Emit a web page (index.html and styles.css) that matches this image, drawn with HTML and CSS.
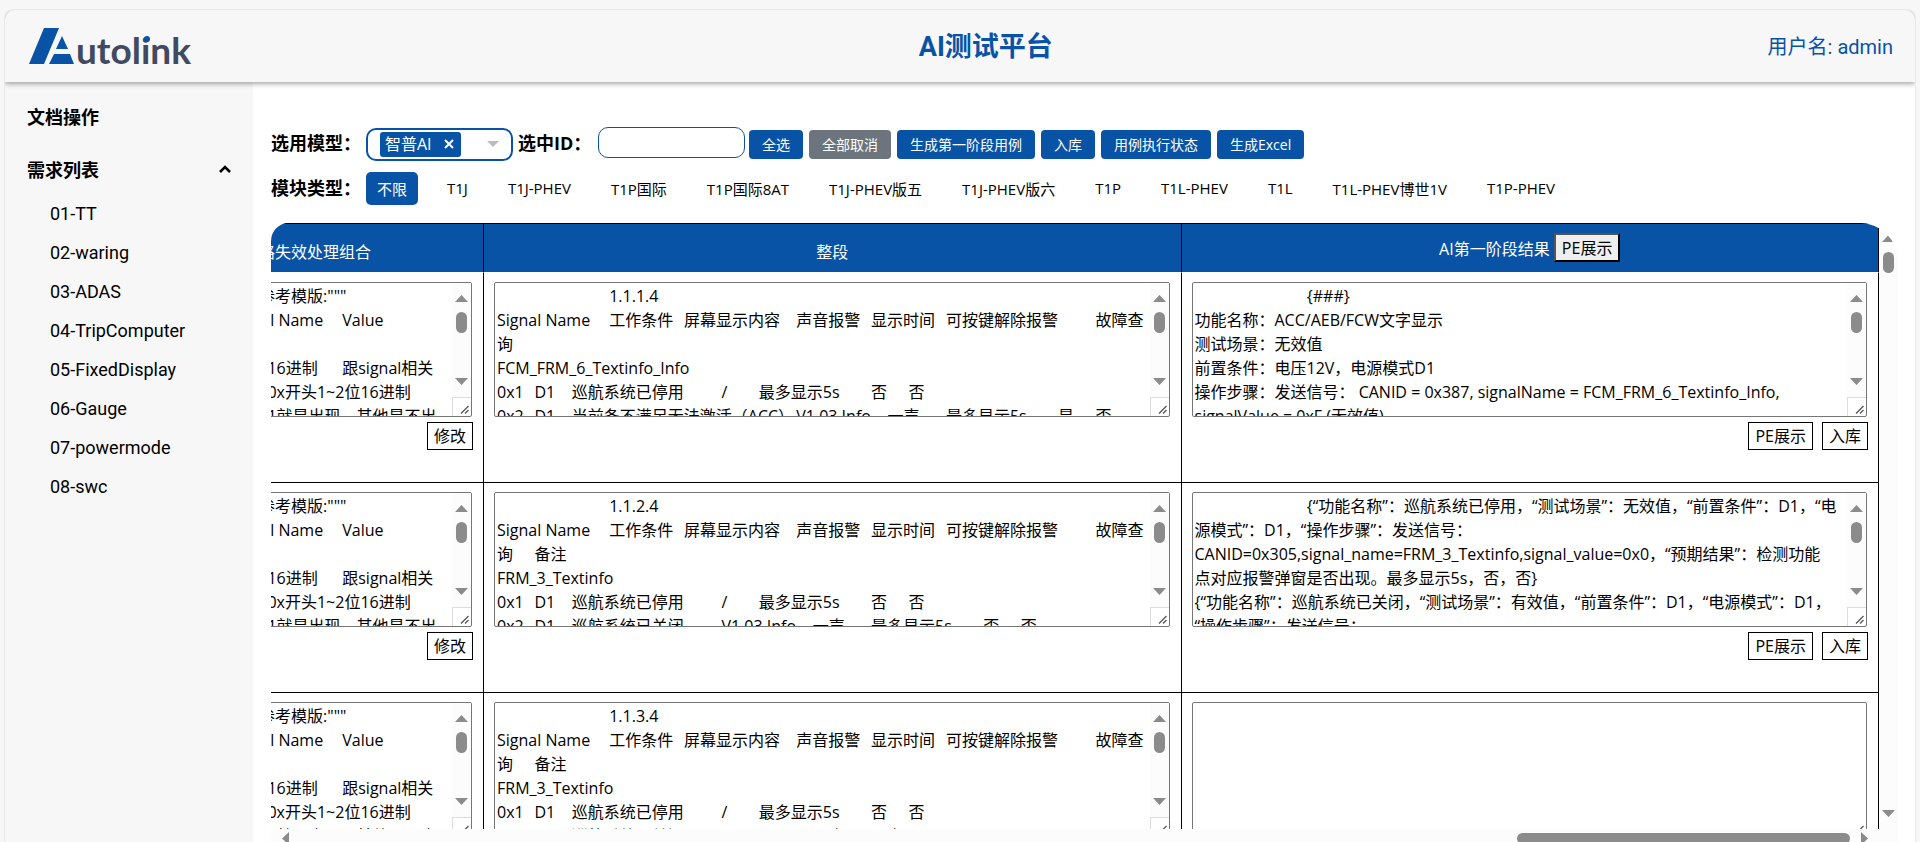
FILE: index.html
```html
<!DOCTYPE html>
<html lang="zh-CN">
<head>
<meta charset="utf-8">
<title>AI测试平台</title>
<link rel="stylesheet" href="styles.css">
</head>
<body>
<svg width="0" height="0" class="defs" aria-hidden="true">
  <symbol id="up" viewBox="0 0 13 7"><path d="M0 7 6.500 0 13 7z"/></symbol>
  <symbol id="down" viewBox="0 0 13 7"><path d="M0 0h13L6.500 7z"/></symbol>
  <symbol id="grip" viewBox="0 0 9 9"><path d="M1 8.500 8.500 1M5 8.500 8.500 5" fill="none" stroke="#555" stroke-width="1.300"/></symbol>
</svg>
<div class="shell">
  <header class="topbar">
    <svg class="logo" width="175" height="50" viewBox="0 0 175 50" role="img" aria-label="Autolink">
      <path fill="#0853a6" d="M15 6h15L15 42H0z"/>
      <path fill="#0853a6" d="M33 14 39 27H27zM25 32h16l4 10H20z"/>
      <text class="logo-text" x="47" y="42">utolink</text>
      <circle cx="118" cy="17" r="3" fill="#0853a6"/>
    </svg>
    <h1 class="title">AI测试平台</h1>
    <div class="user">用户名: admin</div>
  </header>
  <div class="body">
    <nav class="sidebar">
      <div class="side-head">文档操作</div>
      <button class="side-head side-toggle" type="button">需求列表
        <svg width="12" height="8" viewBox="0 0 12 8"><path d="M1 7 6 2l5 5" fill="none" stroke="#000" stroke-width="2.600"/></svg>
      </button>
      <ul class="side-list">
        <li><a href="#">01-TT</a></li>
        <li><a href="#">02-waring</a></li>
        <li><a href="#">03-ADAS</a></li>
        <li><a href="#">04-TripComputer</a></li>
        <li><a href="#">05-FixedDisplay</a></li>
        <li><a href="#">06-Gauge</a></li>
        <li><a href="#">07-powermode</a></li>
        <li><a href="#">08-swc</a></li>
      </ul>
    </nav>
    <main class="main">
      <div class="filters">
        <span class="label" id="model-label">选用模型：</span>
        <div class="combo" role="combobox" aria-labelledby="model-label" aria-expanded="false">
          <span class="tag">智普AI
            <button class="tag-x" type="button" aria-label="移除"><svg width="10" height="10" viewBox="0 0 10 10"><path d="M1 1l8 8M9 1 1 9" stroke="#fff" stroke-width="2"/></svg></button>
          </span>
          <svg class="caret" width="12" height="6" viewBox="0 0 12 6"><path d="M0 0h12L6 6z" fill="#bbb"/></svg>
        </div>
        <label class="label label-id" for="sel-id">选中ID：</label>
        <input class="id-input" id="sel-id" type="text">
        <div class="actions">
          <button class="btn" type="button">全选</button>
          <button class="btn btn-gray" type="button">全部取消</button>
          <button class="btn" type="button">生成第一阶段用例</button>
          <button class="btn" type="button">入库</button>
          <button class="btn" type="button">用例执行状态</button>
          <button class="btn" type="button">生成Excel</button>
        </div>
      </div>
      <div class="types">
        <span class="label">模块类型：</span>
        <div class="chips">
          <button class="chip chip-on" type="button">不限</button>
          <button class="chip" type="button">T1J</button>
          <button class="chip" type="button">T1J-PHEV</button>
          <button class="chip" type="button">T1P国际</button>
          <button class="chip" type="button">T1P国际8AT</button>
          <button class="chip" type="button">T1J-PHEV版五</button>
          <button class="chip" type="button">T1J-PHEV版六</button>
          <button class="chip" type="button">T1P</button>
          <button class="chip" type="button">T1L-PHEV</button>
          <button class="chip" type="button">T1L</button>
          <button class="chip" type="button">T1L-PHEV博世1V</button>
          <button class="chip" type="button">T1P-PHEV</button>
        </div>
      </div>
      <div class="scroller">
        <div class="viewport">
          <table class="cases">
            <colgroup><col class="col-first"><col><col></colgroup>
            <thead>
              <tr>
                <th class="th-right">短路失效处理组合</th>
                <th>整段</th>
                <th class="th-result">AI第一阶段结果 <button class="pe-btn" type="button">PE展示</button></th>
              </tr>
            </thead>
            <tbody>
              <tr>
                <td>
                  <div class="box"><textarea aria-label="处理组合 1">       参考模版:"""
Signal Name&#9;Value

&#9;16进制&#9;跟signal相关
&#9;0x开头1~2位16进制
&#9;1就是出现，其他是不出现</textarea><div class="bar-col"><div class="vbar"><svg><use href="#up"/></svg><i></i><svg><use href="#down"/></svg></div><div class="corner"><svg><use href="#grip"/></svg></div></div></div>
                  <div class="row-btns"><button type="button">修改</button></div>
                </td>
                <td>
                  <div class="box"><textarea aria-label="整段 1">&#9;&#9;&#9;1.1.1.4
Signal Name&#9;工作条件&#9;屏幕显示内容&#9;声音报警&#9;显示时间&#9;可按键解除报警&#9;故障查询
FCM_FRM_6_Textinfo_Info
0x1&#9;D1&#9;巡航系统已停用&#9;/&#9;最多显示5s&#9;否&#9;否
0x2&#9;D1&#9;当前条不满足无法激活（ACC）&#9;V1.03 Info    一声&#9;最多显示5s&#9;是&#9;否</textarea><div class="bar-col"><div class="vbar"><svg><use href="#up"/></svg><i></i><svg><use href="#down"/></svg></div><div class="corner"><svg><use href="#grip"/></svg></div></div></div>
                </td>
                <td>
                  <div class="box"><textarea aria-label="AI第一阶段结果 1">&#9;&#9;&#9;{###}
功能名称：ACC/AEB/FCW文字显示
测试场景：无效值
前置条件：电压12V，电源模式D1
操作步骤：发送信号： CANID = 0x387, signalName = FCM_FRM_6_Textinfo_Info, signalValue = 0xF (无效值)</textarea><div class="bar-col"><div class="vbar"><svg><use href="#up"/></svg><i></i><svg><use href="#down"/></svg></div><div class="corner"><svg><use href="#grip"/></svg></div></div></div>
                  <div class="row-btns"><button type="button">PE展示</button><button type="button">入库</button></div>
                </td>
              </tr>
              <tr>
                <td>
                  <div class="box"><textarea aria-label="处理组合 2">       参考模版:"""
Signal Name&#9;Value

&#9;16进制&#9;跟signal相关
&#9;0x开头1~2位16进制
&#9;1就是出现，其他是不出现</textarea><div class="bar-col"><div class="vbar"><svg><use href="#up"/></svg><i></i><svg><use href="#down"/></svg></div><div class="corner"><svg><use href="#grip"/></svg></div></div></div>
                  <div class="row-btns"><button type="button">修改</button></div>
                </td>
                <td>
                  <div class="box"><textarea aria-label="整段 2">&#9;&#9;&#9;1.1.2.4
Signal Name&#9;工作条件&#9;屏幕显示内容&#9;声音报警&#9;显示时间&#9;可按键解除报警&#9;故障查询&#9;备注
FRM_3_Textinfo
0x1&#9;D1&#9;巡航系统已停用&#9;/&#9;最多显示5s&#9;否&#9;否
0x2&#9;D1&#9;巡航系统已关闭&#9;V1.03 Info    一声&#9;最多显示5s&#9;否&#9;否</textarea><div class="bar-col"><div class="vbar"><svg><use href="#up"/></svg><i></i><svg><use href="#down"/></svg></div><div class="corner"><svg><use href="#grip"/></svg></div></div></div>
                </td>
                <td>
                  <div class="box"><textarea aria-label="AI第一阶段结果 2">&#9;&#9;&#9;{“功能名称”：巡航系统已停用，“测试场景”：无效值，“前置条件”：D1，“电源模式”：D1，“操作步骤”：发送信号：CANID=0x305,signal_name=FRM_3_Textinfo,signal_value=0x0，“预期结果”：检测功能
点对应报警弹窗是否出现。最多显示5s，否，否}
{“功能名称”：巡航系统已关闭，“测试场景”：有效值，“前置条件”：D1，“电源模式”：D1，“操作步骤”：发送信号：</textarea><div class="bar-col"><div class="vbar"><svg><use href="#up"/></svg><i></i><svg><use href="#down"/></svg></div><div class="corner"><svg><use href="#grip"/></svg></div></div></div>
                  <div class="row-btns"><button type="button">PE展示</button><button type="button">入库</button></div>
                </td>
              </tr>
              <tr>
                <td>
                  <div class="box"><textarea aria-label="处理组合 3">       参考模版:"""
Signal Name&#9;Value

&#9;16进制&#9;跟signal相关
&#9;0x开头1~2位16进制
&#9;1就是出现，其他是不出现</textarea><div class="bar-col"><div class="vbar"><svg><use href="#up"/></svg><i></i><svg><use href="#down"/></svg></div><div class="corner"><svg><use href="#grip"/></svg></div></div></div>
                </td>
                <td>
                  <div class="box"><textarea aria-label="整段 3">&#9;&#9;&#9;1.1.3.4
Signal Name&#9;工作条件&#9;屏幕显示内容&#9;声音报警&#9;显示时间&#9;可按键解除报警&#9;故障查询&#9;备注
FRM_3_Textinfo
0x1&#9;D1&#9;巡航系统已停用&#9;/&#9;最多显示5s&#9;否&#9;否
0x2&#9;D1&#9;巡航系统已关闭&#9;V1.03 Info    一声&#9;最多显示5s&#9;否&#9;否</textarea><div class="bar-col"><div class="vbar"><svg><use href="#up"/></svg><i></i><svg><use href="#down"/></svg></div><div class="corner"><svg><use href="#grip"/></svg></div></div></div>
                </td>
                <td>
                  <div class="box box-empty"><textarea aria-label="AI第一阶段结果 3"></textarea><div class="bar-col"><div class="corner"><svg><use href="#grip"/></svg></div></div></div>
                </td>
              </tr>
            </tbody>
          </table>
        </div>
        <div class="vbar"><svg><use href="#up"/></svg><i></i><svg><use href="#down"/></svg></div>
        <div class="hbar">
          <svg width="7" height="13" viewBox="0 0 7 13"><path d="M7 0v13L0 6.500z"/></svg>
          <i></i>
          <svg width="7" height="13" viewBox="0 0 7 13"><path d="M0 0v13l7-6.500z"/></svg>
        </div>
      </div>
    </main>
  </div>
</div>
</body>
</html>
```
FILE: styles.css
```css
* { box-sizing: border-box; }

body {
  display: flex;
  height: 100vh;
  margin: 0;
  overflow: hidden;
  background: #f7f7f7;
  color: #000;
  font: 16px/24px "Open Sans", "Noto Sans CJK SC", sans-serif;
}

button, input, textarea { font-family: inherit; color: inherit; }
button { cursor: pointer; }
.defs { position: absolute; }

.shell {
  display: flex;
  flex: 1;
  flex-direction: column;
  height: 100vh;
  margin: 9px 4px 0;
  border: 1px solid #e9e9e9;
  border-radius: 10px 10px 0 0;
}

.topbar {
  position: relative;
  display: flex;
  flex: none;
  align-items: center;
  justify-content: space-between;
  height: 72px;
  padding: 2px 22px 0 24px;
  background: #f7f7f7;
  border-radius: 10px 10px 0 0;
  box-shadow: 0 2px 5px rgba(0, 0, 0, .35);
  clip-path: inset(0 0 -10px 0);
  color: #0853a6;
  font-family: Roboto, "Noto Sans CJK SC", sans-serif;
}

.logo-text { font: 700 37px Lato, sans-serif; fill: #414a60; }
.title { margin: 0; font-size: 27px; line-height: 36px; }
.user { font-size: 20px; }

.body { display: flex; flex: 1; min-height: 0; }

.sidebar {
  flex: none;
  width: 248px;
  padding: 23px 22px 0;
  background: #f7f7f7;
  font-family: Roboto, "Noto Sans CJK SC", sans-serif;
}

.side-head {
  display: flex;
  align-items: center;
  justify-content: space-between;
  width: 100%;
  height: 26px;
  margin-bottom: 25px;
  padding: 0;
  border: 0;
  background: none;
  font-size: 18px;
  font-weight: 700;
}

.side-toggle { margin-bottom: 12px; }
.side-list { margin: 0; padding: 0 0 0 23px; list-style: none; font-size: 18px; line-height: 39px; }
.side-list a { color: inherit; text-decoration: none; }

.main {
  display: flex;
  flex: 1;
  flex-direction: column;
  min-width: 0;
  padding: 44px 17px 2px 18px;
  background: #fff;
}

.filters, .types { display: flex; align-items: center; }
.filters { height: 36px; }
.types { height: 34px; margin: 9px 0 18px; }
.label { flex: none; width: 95px; font-size: 18px; font-weight: 700; }
.filters .label { padding-bottom: 3px; }
.label-id { width: 80px; margin-left: 5px; }

.combo {
  display: flex;
  align-items: center;
  justify-content: space-between;
  width: 147px;
  height: 33px;
  padding: 0 12px;
  border: 2px solid #0853a6;
  border-radius: 10px;
}

.tag {
  display: flex;
  align-items: center;
  gap: 12px;
  height: 25px;
  padding: 0 7px 0 5px;
  border-radius: 3px;
  background: #0853a6;
  color: #fff;
}

.tag-x { display: flex; padding: 0; border: 0; background: none; }

.id-input {
  width: 147px;
  height: 31px;
  margin: 0 4px 3px 0;
  border: 1px solid #0853a6;
  border-radius: 10px;
}

.actions { display: flex; gap: 6px; }

.btn {
  height: 29px;
  padding: 0 13px;
  border: 0;
  border-radius: 4px;
  background: #0853a6;
  color: #fff;
  font-size: 14px;
}

.btn-gray { background: #6c757d; }

.chips { display: flex; gap: 18px; }

.chip {
  height: 33px;
  padding: 0 11px;
  border: 0;
  border-radius: 5px;
  background: none;
  font-size: 15px;
}

.chip-on { background: #0853a6; color: #fff; }

.scroller {
  display: grid;
  flex: 1;
  grid-template: minmax(0, 1fr) 19px / minmax(0, 1fr) 19px;
  min-height: 0;
  overflow: hidden;
  border-radius: 18px 38px 0 0;
  background: #fcfcfc;
}

.viewport { overflow: hidden; background: #fff; }

.cases {
  width: calc(100% + 54px);
  margin-left: -54px;
  border-spacing: 0;
  table-layout: fixed;
}

.col-first { width: 267px; }

.cases th {
  height: 50px;
  padding: 7px 10px 0;
  border: solid #000;
  border-width: 1px 1px 1px 0;
  border-bottom-color: #fff;
  background: #0853a6;
  color: #fff;
  font-weight: 400;
}

.cases .th-right { padding-right: 112px; text-align: right; white-space: nowrap; }
.cases .th-result { padding: 0 10px 2px; }

.pe-btn {
  height: 29px;
  padding: 0 6px;
  border: 2px outset #000;
  background: #efefef;
  color: #000;
  font-size: 16px;
}

.cases td {
  height: 210px;
  padding: 9px 10px 0;
  border: solid #000;
  border-width: 0 1px 1px 0;
  vertical-align: top;
}

.box {
  display: flex;
  height: 135px;
  margin-right: 1px;
  border: 1px solid #767676;
  border-radius: 2px;
}

.box textarea {
  flex: 1;
  min-width: 0;
  padding: 1px 2px 0;
  border: 0;
  outline: 0;
  background: none;
  font-size: 16px;
  line-height: 24px;
  overflow: hidden;
  resize: none;
  tab-size: 9;
}

.bar-col { display: flex; flex: none; flex-direction: column; width: 19px; }

.vbar {
  display: flex;
  flex: 1;
  flex-direction: column;
  align-items: center;
  padding: 12px 0;
  background: #fcfcfc;
}

.vbar svg { flex: none; width: 13px; height: 7px; fill: #8b8b8b; }
.vbar svg:last-child { margin-top: auto; }
.vbar i { width: 11px; height: 21px; margin-top: 10px; border-radius: 6px; background: #8b8b8b; }

.corner {
  display: flex;
  align-items: flex-end;
  justify-content: flex-end;
  height: 19px;
  margin-top: auto;
  padding: 2px;
  border: solid #dcdcdc;
  border-width: 1px 0 0 1px;
}

.corner svg { width: 9px; height: 9px; }
.box-empty .corner { border: 0; }

.row-btns { display: flex; justify-content: flex-end; gap: 9px; margin-top: 5px; }

.row-btns button {
  height: 28px;
  padding: 0 6px 2px;
  border: 1px solid #000;
  background: #fff;
  font-size: 16px;
}

.hbar {
  display: flex;
  align-items: center;
  padding: 0 11px;
}

.hbar svg { flex: none; fill: #8b8b8b; }
.hbar i { width: 21%; height: 11px; margin: 0 11px 0 auto; border-radius: 6px; background: #8b8b8b; }
```
